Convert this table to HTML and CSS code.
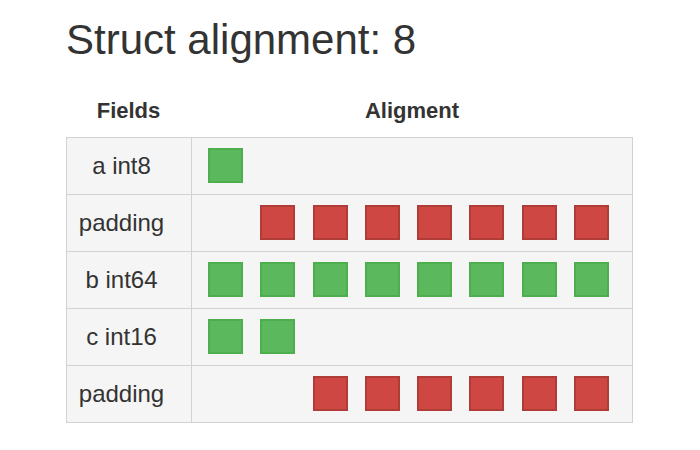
FILE: index.html
```html
<!DOCTYPE html>
<html>
<head>
<meta charset="utf-8">
<link rel="stylesheet" href="styles.css">
</head>
<body>
<div class="page">
  <h1 class="title">Struct alignment: 8</h1>
  <div class="head">
    <div class="hcell">Fields</div>
    <div class="hcell">Aligment</div>
  </div>
  <div class="table">
    <div class="row">
      <div class="name">a int8</div>
      <div class="slots"><span class="box g"></span><span class="box e"></span><span class="box e"></span><span class="box e"></span><span class="box e"></span><span class="box e"></span><span class="box e"></span><span class="box e"></span></div>
    </div>
    <div class="row">
      <div class="name">padding</div>
      <div class="slots"><span class="box e"></span><span class="box r"></span><span class="box r"></span><span class="box r"></span><span class="box r"></span><span class="box r"></span><span class="box r"></span><span class="box r"></span></div>
    </div>
    <div class="row">
      <div class="name">b int64</div>
      <div class="slots"><span class="box g"></span><span class="box g"></span><span class="box g"></span><span class="box g"></span><span class="box g"></span><span class="box g"></span><span class="box g"></span><span class="box g"></span></div>
    </div>
    <div class="row">
      <div class="name">c int16</div>
      <div class="slots"><span class="box g"></span><span class="box g"></span><span class="box e"></span><span class="box e"></span><span class="box e"></span><span class="box e"></span><span class="box e"></span><span class="box e"></span></div>
    </div>
    <div class="row">
      <div class="name">padding</div>
      <div class="slots"><span class="box e"></span><span class="box e"></span><span class="box r"></span><span class="box r"></span><span class="box r"></span><span class="box r"></span><span class="box r"></span><span class="box r"></span></div>
    </div>
  </div>
</div>
</body>
</html>
```
FILE: styles.css
```css
html, body {
  margin: 0;
  padding: 0;
  background: #ffffff;
}
body {
  font-family: "Liberation Sans", Arial, sans-serif;
  color: #333333;
}
.page {
  padding: 14px 0 0 66px;
  width: 567px;
}
.title {
  margin: 0;
  font-size: 42px;
  font-weight: normal;
  line-height: 52px;
  color: #333333;
}
.head {
  display: grid;
  grid-template-columns: 125px 1fr;
  height: 71px;
  align-items: center;
}
.hcell {
  text-align: center;
  font-weight: bold;
  font-size: 22px;
  padding-top: 18px;
}
.table {
  border: 1px solid #d2d2d2;
  border-top: none;
  background: #f5f5f5;
}
.row {
  display: grid;
  grid-template-columns: 125px 1fr;
  border-top: 1px solid #d2d2d2;
  height: 56px;
}
.name {
  border-right: 1px solid #d2d2d2;
  display: flex;
  align-items: center;
  justify-content: center;
  padding-right: 15px;
  font-size: 24px;
}
.slots {
  display: flex;
  align-items: center;
  gap: 17.29px;
  padding-left: 16px;
  padding-bottom: 2px;
}
.box {
  width: 35px;
  height: 35px;
  box-sizing: border-box;
  flex: none;
}
.g {
  background: #5cb85c;
  border: 2px solid #4cae4c;
}
.r {
  background: #cf4742;
  border: 2px solid #b03c38;
}
.e {
  visibility: hidden;
}
```
